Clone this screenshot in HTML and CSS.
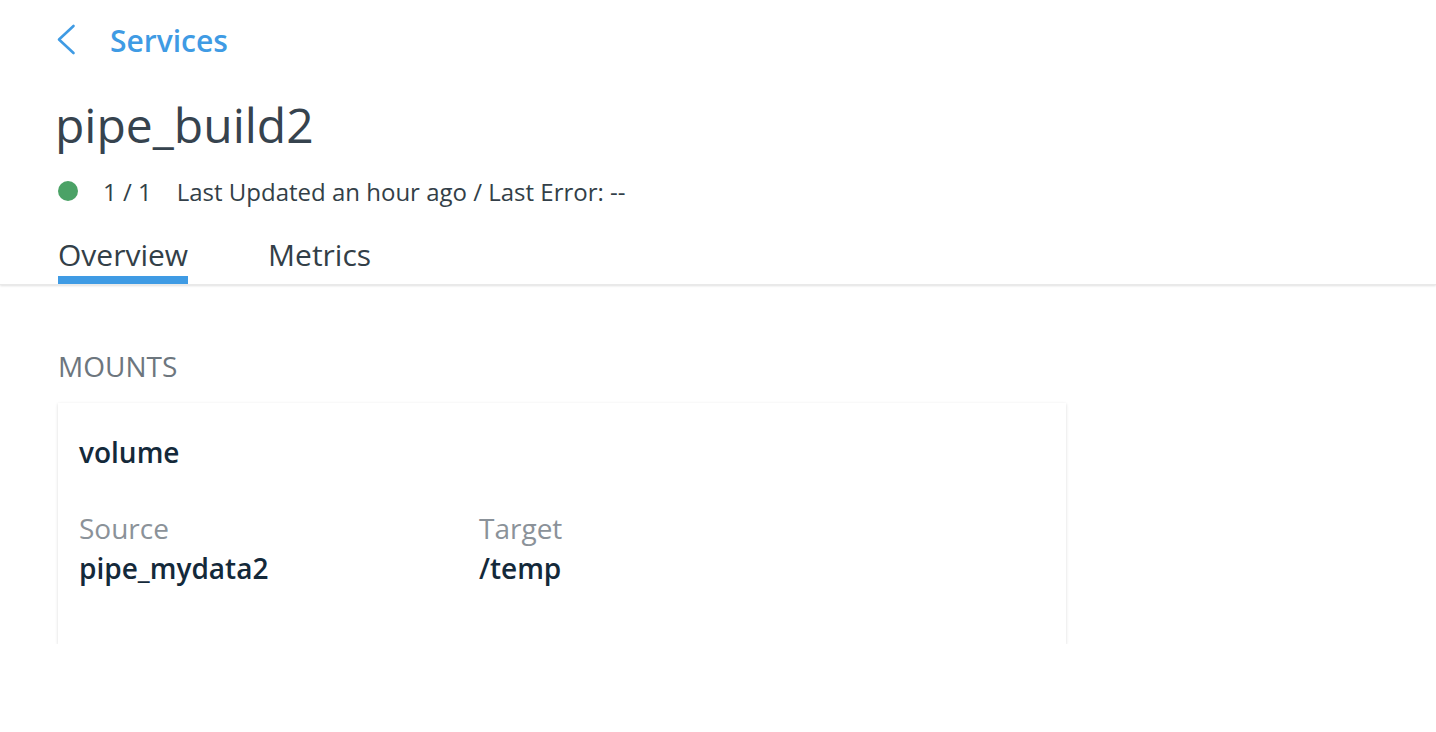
FILE: index.html
```html
<!DOCTYPE html>
<html>
<head>
<meta charset="utf-8">
<link rel="stylesheet" href="styles.css">
</head>
<body>
<div class="header">
  <a class="back">
    <svg class="chev" width="20" height="32" viewBox="0 0 20 32"><path d="M17.5 2 L3 15.5 L17.5 29" fill="none" stroke="#3f9be4" stroke-width="2.6" stroke-linecap="round" stroke-linejoin="round"/></svg>
    <span class="back-label">Services</span>
  </a>
  <h1 class="title">pipe_build2</h1>
  <div class="status">
    <span class="dot"></span>
    <span class="count">1 / 1</span>
    <span class="updated">Last Updated an hour ago / Last Error: --</span>
  </div>
  <div class="tabs">
    <div class="tab active">Overview</div>
    <div class="tab">Metrics</div>
  </div>
</div>
<div class="content">
  <div class="section-title">MOUNTS</div>
  <div class="card">
    <div class="card-title">volume</div>
    <div class="fields">
      <div class="field">
        <div class="label">Source</div>
        <div class="value">pipe_mydata2</div>
      </div>
      <div class="field">
        <div class="label">Target</div>
        <div class="value">/temp</div>
      </div>
    </div>
  </div>
</div>
</body>
</html>
```
FILE: styles.css
```css
html, body {
  margin: 0;
  padding: 0;
  background: #ffffff;
  font-family: "Open Sans", "Liberation Sans", sans-serif;
  color: #333f48;
}
.header {
  padding: 0 0 0 58px;
  box-shadow: 0 1px 2px rgba(0,0,0,0.12);
  border-bottom: 1px solid #e9e9e9;
}
.back {
  display: flex;
  align-items: center;
  height: 80px;
  gap: 33px;
  color: #3f9be4;
  text-decoration: none;
}
.chev {
  display: block;
  margin-left: -2px;
}
.back-label {
  font-size: 30px;
  font-weight: 600;
  margin-left: 1px;
}
.title {
  margin: 13px 0 0 -3px;
  font-size: 48px;
  font-weight: 400;
  line-height: 64px;
  color: #36434e;
}
.status {
  display: flex;
  align-items: center;
  height: 50px;
  margin-top: 9px;
  font-size: 24px;
  color: #333f48;
}
.dot {
  width: 20px;
  height: 20px;
  border-radius: 50%;
  background: #4ba266;
  margin-right: 25px;
}
.count {
  margin-right: 25px;
}
.tabs {
  display: flex;
  gap: 80px;
  margin-top: 19px;
}
.tab {
  font-size: 30px;
  line-height: 40px;
  padding-bottom: 1px;
  border-bottom: 8px solid transparent;
  color: #333f48;
}
.tab.active {
  border-bottom-color: #3f9be4;
}
.content {
  padding: 63px 0 0 58px;
}
.section-title {
  font-size: 28px;
  color: #6d767e;
  line-height: 36px;
}
.card {
  width: 966px;
  margin-top: 19px;
  padding: 31px 21px 55px;
  background: #fff;
  box-shadow: 0 1px 3px rgba(0,0,0,0.15);
}
.card-title {
  font-size: 28px;
  font-weight: 600;
  color: #14293a;
  line-height: 36px;
}
.fields {
  display: flex;
  margin-top: 39px;
}
.field {
  width: 400px;
}
.label {
  font-size: 28px;
  color: #8b9299;
  line-height: 38px;
}
.value {
  font-size: 28px;
  font-weight: 600;
  color: #14293a;
  line-height: 42px;
}
```
